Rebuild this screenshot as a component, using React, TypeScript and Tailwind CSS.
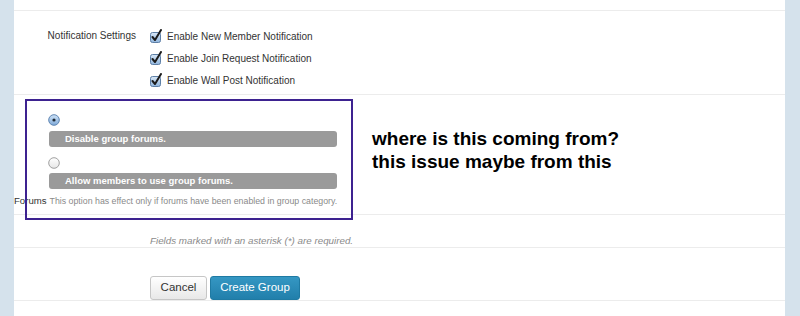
import React from "react";

const CheckIcon: React.FC = () => (
    <svg width="13" height="14" viewBox="0 0 13 14" className="shrink-0">
        <defs>
            <linearGradient id="cb" x1="0" y1="0" x2="0" y2="1">
                <stop offset="0" stopColor="#d9e8f7"/>
                <stop offset="1" stopColor="#8fb4dc"/>
            </linearGradient>
        </defs>
        <rect x="0.5" y="3.5" width="10" height="10" rx="2" fill="url(#cb)" stroke="#5d7fa6"/>
        <path d="M2.5 8 L5 11 L11 1" fill="none" stroke="#1b1b1b" strokeWidth="2" strokeLinecap="round" strokeLinejoin="round"/>
    </svg>
)

const Radio: React.FC<{ checked?: boolean }> = ({checked}) => (
    <svg width="12" height="12" viewBox="0 0 12 12" className="shrink-0">
        <defs>
            <linearGradient id="rOn" x1="0" y1="0" x2="0" y2="1">
                <stop offset="0" stopColor="#cfe3f7"/>
                <stop offset="1" stopColor="#7fa9d8"/>
            </linearGradient>
            <linearGradient id="rOff" x1="0" y1="0" x2="0" y2="1">
                <stop offset="0" stopColor="#ffffff"/>
                <stop offset="1" stopColor="#e6e6e6"/>
            </linearGradient>
        </defs>
        <circle cx="6" cy="6" r="5.3" fill={checked ? "url(#rOn)" : "url(#rOff)"} stroke={checked ? "#5f86b3" : "#a0a0a0"}/>
        {checked && <circle cx="6" cy="6" r="1.6" fill="#1f2a36"/>}
    </svg>
)

const Option: React.FC<{ label: string }> = ({label}) => (
    <div className="flex items-center gap-[4px] h-[22px]">
        <CheckIcon/>
        <span className="text-[10px] text-[#333]">{label}</span>
    </div>
)

export default function App() {
    return (
        <div className="relative flex w-[800px] h-[316px] bg-white overflow-hidden"
             style={{fontFamily: '"Liberation Sans", Arial, sans-serif'}}>
            <div className="w-[14px] bg-[#d5e2ec]"/>

            <div className="flex-1 flex flex-col">
                <div className="h-[11px] border-b border-[#ececec]"/>

                <div className="h-[84px] border-b border-[#ececec] flex pt-[14px]">
                    <div className="w-[122px] text-right text-[10px] text-[#333] leading-[22px]">
                        Notification Settings
                    </div>
                    <div className="ml-[14px] flex flex-col">
                        <Option label="Enable New Member Notification"/>
                        <Option label="Enable Join Request Notification"/>
                        <Option label="Enable Wall Post Notification"/>
                    </div>
                </div>

                <div className="h-[120px] border-b border-[#ececec] flex flex-col pt-[19px]">
                    <div className="pl-[34px]">
                        <Radio checked/>
                    </div>
                    <div className="ml-[35px] mt-[5px] w-[288px] h-[16px] rounded-[3px] bg-[#9a9a9a] text-white font-bold text-[9.5px] leading-[16px] pl-[16px]">
                        Disable group forums.
                    </div>
                    <div className="pl-[34px] mt-[10px]">
                        <Radio/>
                    </div>
                    <div className="ml-[35px] mt-[4px] w-[288px] h-[16px] rounded-[3px] bg-[#9a9a9a] text-white font-bold text-[9.5px] leading-[16px] pl-[16px]">
                        Allow members to use group forums.
                    </div>
                    <div className="mt-[5px] flex items-baseline gap-[3px] leading-[14px]">
                        <span className="text-[9.6px] text-[#333]">Forums</span>
                        <span className="text-[8.8px] text-[#8a8a8a]">
                            This option has effect only if forums have been enabled in group category.
                        </span>
                    </div>
                </div>

                <div className="h-[33px] border-b border-[#ececec] pl-[136px] pt-[12px]">
                    <span className="text-[9.8px] italic text-[#8a8a8a]">Fields marked with an asterisk (*) are required.</span>
                </div>

                <div className="h-[53px] border-b border-[#ececec] pl-[136px] pt-[28px] flex gap-[3px]">
                    <button className="w-[57px] h-[24px] rounded-[3px] border border-[#c6c6c6] bg-gradient-to-b from-white to-[#e8e8e8] text-[11.5px] text-[#333]">
                        Cancel
                    </button>
                    <button className="w-[90px] h-[24px] rounded-[3px] border border-[#1f7aa3] bg-gradient-to-b from-[#3597c3] to-[#217fab] text-[11.5px] text-white">
                        Create Group
                    </button>
                </div>
                <div className="flex-1"/>
            </div>

            <div className="w-[15px] bg-[#d5e2ec]"/>

            {/* annotation overlays */}
            <div className="absolute left-[25px] top-[99px] w-[328px] h-[121px] border-2 border-[#3d2290]"/>
            <div className="absolute left-[372px] top-[127px] text-[19px] font-bold text-black leading-[23px]">
                <div>where is this coming from?</div>
                <div>this issue maybe from this</div>
            </div>
        </div>
    )
}
